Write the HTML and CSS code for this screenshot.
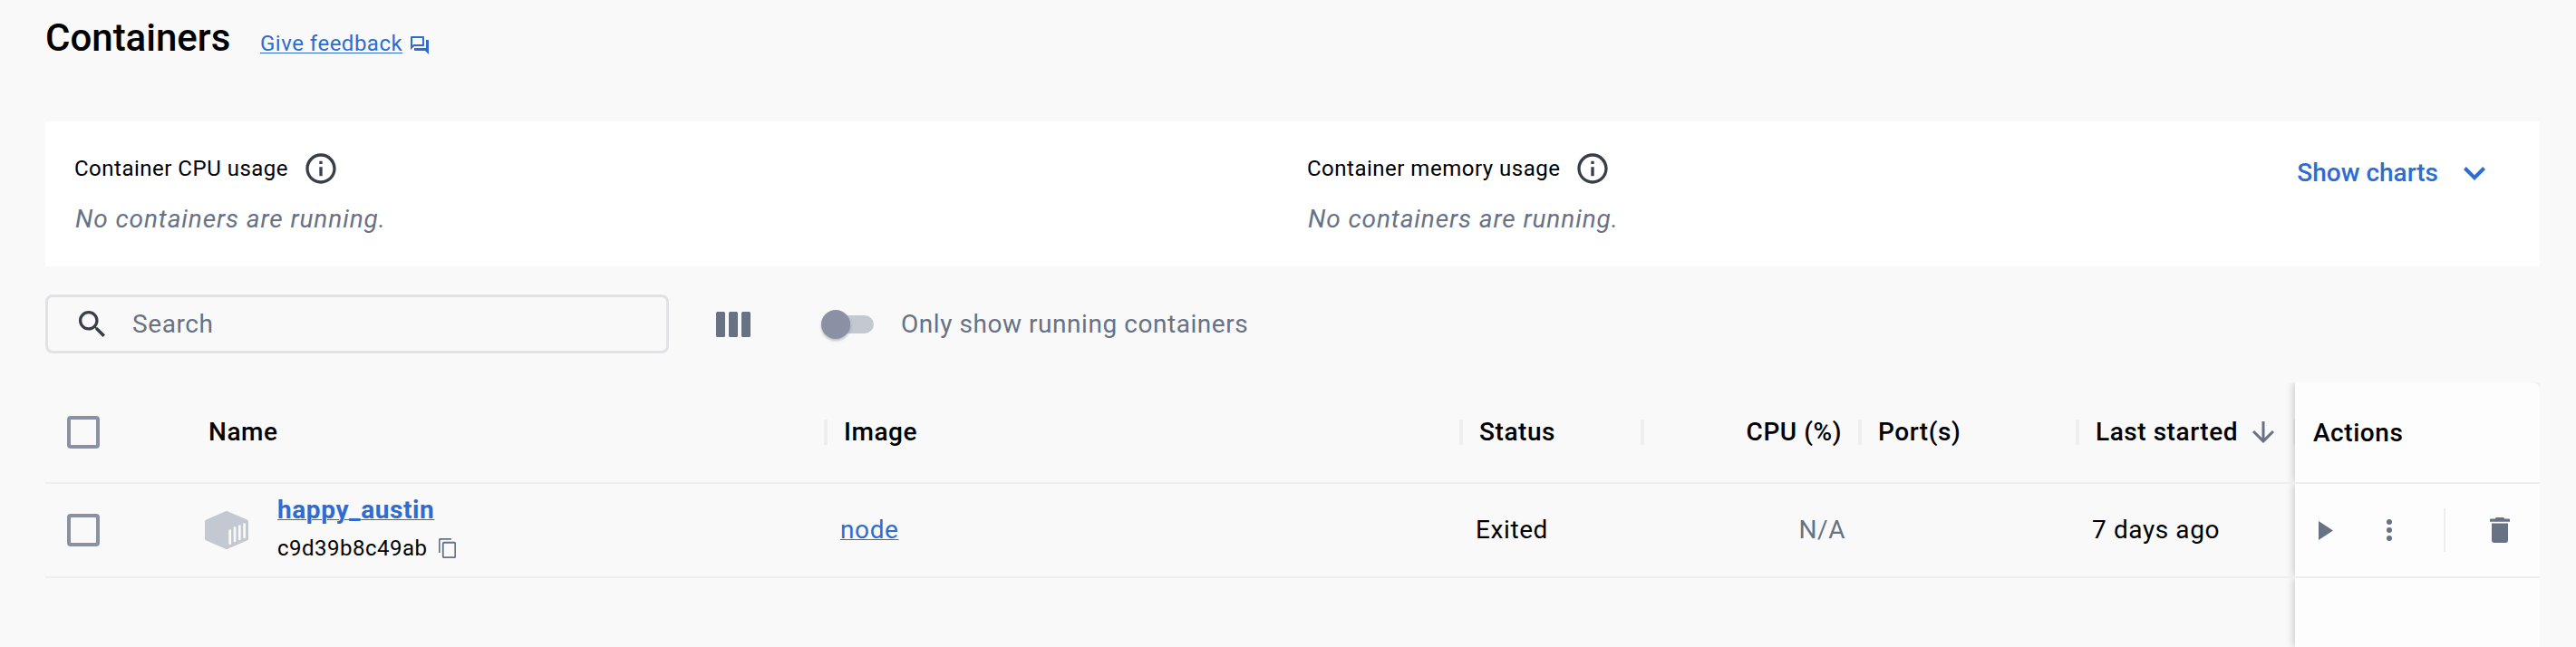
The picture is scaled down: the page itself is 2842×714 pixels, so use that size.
FILE: index.html
```
<!DOCTYPE html>
<html lang="en">
<head>
<meta charset="utf-8">
<title>Containers</title>
<link rel="stylesheet" href="styles.css">
</head>
<body>
<header class="page-head">
  <h1 class="title">Containers</h1>
  <a class="feedback"><span class="feedback-text">Give feedback</span>
    <svg class="forum" viewBox="2 2 20 20"><path d="M15 4v7H5.170L4 12.170V4h11m1-2H3c-.55 0-1 .45-1 1v14l4-4h10c.55 0 1-.45 1-1V3c0-.55-.45-1-1-1zm5 4h-2v9H6v2c0 .55.45 1 1 1h11l4 4V7c0-.55-.45-1-1-1z"/></svg>
  </a>
</header>

<section class="usage">
  <div class="metric">
    <div class="metric-label"><span class="t-small">Container CPU usage</span>
      <svg class="info" viewBox="0 0 24 24"><path d="M11 7h2v2h-2zm0 4h2v6h-2zm1-9C6.480 2 2 6.480 2 12s4.480 10 10 10 10-4.480 10-10S17.520 2 12 2zm0 18c-4.410 0-8-3.590-8-8s3.590-8 8-8 8 3.590 8 8-3.590 8-8 8z"/></svg>
    </div>
    <p class="metric-value">No containers are running.</p>
  </div>
  <div class="metric">
    <div class="metric-label"><span class="t-small">Container memory usage</span>
      <svg class="info" viewBox="0 0 24 24"><path d="M11 7h2v2h-2zm0 4h2v6h-2zm1-9C6.480 2 2 6.480 2 12s4.480 10 10 10 10-4.480 10-10S17.520 2 12 2zm0 18c-4.410 0-8-3.590-8-8s3.590-8 8-8 8 3.590 8 8-3.590 8-8 8z"/></svg>
    </div>
    <p class="metric-value">No containers are running.</p>
  </div>
  <button class="charts"><span>Show charts</span>
    <svg class="chevron" viewBox="6 8.590 12 7.410"><path d="M7.410 8.590 12 13.170l4.590-4.580L18 10l-6 6-6-6z"/></svg>
  </button>
</section>

<div class="toolbar">
  <div class="search">
    <svg class="search-icon" viewBox="3 3 17.490 17.490"><path d="M15.500 14h-.79l-.28-.27C15.410 12.590 16 11.110 16 9.500 16 5.910 13.090 3 9.500 3S3 5.910 3 9.500 5.910 16 9.500 16c1.610 0 3.090-.59 4.230-1.570l.27.28v.79l5 4.990L20.490 19l-4.990-5zm-6 0C7.010 14 5 11.990 5 9.500S7.010 5 9.500 5 14 7.010 14 9.500 11.990 14 9.500 14z"/></svg>
    <span class="search-text">Search</span>
  </div>
  <svg class="columns" viewBox="0 0 38 28"><rect width="10" height="28" rx="1.500"/><rect x="14" width="10" height="28" rx="1.500"/><rect x="28" width="10" height="28" rx="1.500"/></svg>
  <div class="switch"><span class="thumb"></span></div>
  <span class="switch-label">Only show running containers</span>
</div>

<main class="grid">
  <div class="row head">
    <div class="cell check"><span class="box"></span></div>
    <div class="cell">Name</div>
    <div class="cell sep"><span>Image</span></div>
    <div class="cell sep"><span>Status</span></div>
    <div class="cell sep right"><span>CPU (%)</span></div>
    <div class="cell sep"><span>Port(s)</span></div>
    <div class="cell sep sorted"><span>Last started</span>
      <svg class="arrow" viewBox="0 0 24 24"><path d="M24 12l-2.120-2.120L13.500 18.260V0h-3v18.260L2.120 9.880 0 12l12 12z"/></svg>
    </div>
    <div class="cell pinned actions-head"><span>Actions</span></div>
  </div>
  <div class="row body">
    <div class="cell check"><span class="box"></span></div>
    <div class="cell">
      <svg class="cube" viewBox="0 0 48 42"><path class="cube-face" d="M22.800.3Q24-.3 25.200.3L47 9.800Q48 10.300 48 11.400V30.600Q48 31.700 47 32.200L25.200 41.700Q24 42.300 22.800 41.700L1 32.200Q0 31.700 0 30.600V11.400Q0 10.300 1 9.800z"/><path class="cube-ribs" d="M27.700 21.500V35.800M33 18.500V33M38.300 16.500V31M43.600 14.500V28.800"/></svg>
      <div class="ident">
        <a class="name">happy_austin</a>
        <div class="hash"><span class="t-small">c9d39b8c49ab</span>
          <svg class="copy" viewBox="0 0 19 22"><path d="M.75 16V2.200Q.75.75 2.200.75H14"/><rect x="4.750" y="4.750" width="13.500" height="16.500" rx="1.200"/></svg>
        </div>
      </div>
    </div>
    <div class="cell"><a class="link">node</a></div>
    <div class="cell">Exited</div>
    <div class="cell right muted">N/A</div>
    <div class="cell"></div>
    <div class="cell">7 days ago</div>
    <div class="cell pinned actions">
      <svg class="play" viewBox="0 0 16 21"><path d="M0 0v21l16-10.500z"/></svg>
      <svg class="dots" viewBox="0 0 6 24"><circle cx="3" cy="3" r="3"/><circle cx="3" cy="12" r="3"/><circle cx="3" cy="21" r="3"/></svg>
      <span class="divider"></span>
      <svg class="trash" viewBox="0 0 22 28"><path d="M6 1.200Q6.300 0 7.500 0h7q1.200 0 1.500 1.200V1.600H21q1 0 1 1v2.200H0V2.600q0-1 1-1h5zM2 6.500h18V25q0 3-3 3H5q-3 0-3-3z"/></svg>
    </div>
  </div>
  <div class="row rest"><div class="cell pinned"></div></div>
</main>
</body>
</html>
```
FILE: styles.css
```
* { box-sizing: border-box; }
body {
  margin: 0;
  height: 714px;
  overflow: hidden;
  background: #f9f9f9;
  color: #000;
  font: 400 28px/32px Roboto, sans-serif;
  letter-spacing: 0.6px;
  display: flex;
  flex-direction: column;
  padding: 0 40px 0 50px;
}
svg { display: block; flex: none; fill: currentColor; }
.page-head { height: 134px; display: flex; align-items: flex-start; padding-top: 18px; }
.title { margin: 0; font: 500 42px/48px Roboto, sans-serif; letter-spacing: 0; width: 237px; }
.feedback { display: flex; color: #2e6cd4; font-size: 24px; letter-spacing: 0.5px; padding-top: 14px; }
.feedback-text { width: 156px; margin-right: 10px; white-space: nowrap; line-height: 32px; text-decoration: underline; text-decoration-thickness: 1px; text-underline-offset: 2px; }
.forum { width: 20px; height: 20px; margin-top: 8px; }

.usage { height: 160px; background: #fff; display: flex; padding: 32px 60px 0 32px; }
.metric { width: 1360px; flex: none; }
.metric + .metric { width: 800px; }
.metric-label { display: flex; align-items: center; height: 40px; gap: 16px; }
.t-small { font-size: 24px; letter-spacing: 0.5px; white-space: nowrap; }
.info { width: 40px; height: 40px; color: #393f49; }
.metric-value { margin: 20px 0 0 1px; font-style: italic; letter-spacing: 0.9px; color: #677285; white-space: nowrap; }
.charts { border: 0; background: none; padding: 0; margin-left: auto; height: 50px; font: 500 28px/32px Roboto, sans-serif; color: #2e6cd4; display: flex; align-items: center; gap: 28px; white-space: nowrap; }
.chevron { width: 24px; height: 15px; }

.toolbar { height: 128px; display: flex; align-items: center; }
.search { width: 688px; height: 65px; margin-bottom: 1px; border: 3px solid #e1e2e6; border-radius: 8px; display: flex; align-items: center; padding-left: 34px; gap: 30px; color: #677285; }
.search-icon { width: 29px; height: 29px; color: #393f49; }
.columns { width: 38px; height: 28px; margin-left: 52px; color: #677285; }
.switch { width: 56px; height: 20px; margin-left: 80px; border-radius: 10px; background: #c4c8d1; display: flex; align-items: center; }
.thumb { width: 32px; height: 32px; margin-left: -2px; border-radius: 50%; background: #8b91a5; box-shadow: 0 2px 3px rgba(0,0,0,.25); flex: none; }
.switch-label { margin-left: 30px; letter-spacing: 0.55px; color: #677285; white-space: nowrap; }

.grid { width: 2752px; height: 292px; display: flex; flex-direction: column; flex: none; }
.row { display: grid; grid-template-columns: 160px 701px 701px 200px 240px 240px 240px 270px; }
.cell { display: flex; align-items: center; white-space: nowrap; padding: 0 16px; height: 100%; }
.head { height: 112px; border-bottom: 2px solid #edeef0; font-weight: 500; letter-spacing: 0.55px; }
.head .cell { padding: 0 20px; }
.body { height: 104px; border-bottom: 2px solid #edeef0; }
.rest { flex: 1; }
.row .check { padding: 0 24px; }
.box { width: 36px; height: 36px; border: 4px solid #8b91a5; border-radius: 4px; }
.sep::before, .sorted::after { content: ""; width: 4px; height: 28px; flex: none; background: #edeef0; margin: 0 18px 0 -22px; }
.sep.right::before { margin-right: auto; }
.sorted::after { margin: 0 -22px 0 auto; }
.right { justify-content: flex-end; }
.arrow { width: 24px; height: 24px; margin-left: 16px; color: #677285; }
.pinned { grid-column: 8; background: #fdfdfd; box-shadow: -2px 0 8px rgba(0,0,0,.18); clip-path: inset(0 0 0 -12px); }
.head .actions-head { border-top-right-radius: 8px; padding-top: 2px; }
.cube { width: 48px; height: 42px; margin-right: 32px; }
.cube-face { fill: #c4c8d1; }
.cube-ribs { fill: none; stroke: #f9f9f9; stroke-width: 2.700; stroke-linecap: round; }
.name { display: block; margin: -2px 0 10px; font-weight: 700; color: #2e6cd4; text-decoration: underline; text-decoration-thickness: 1px; }
.hash { display: flex; align-items: center; gap: 12px; }
.copy { width: 19px; height: 22px; fill: none; stroke: #677285; stroke-width: 1.800; }
.link { color: #2e6cd4; text-decoration: underline; text-decoration-thickness: 1px; }
.muted { color: #677285; }
.row .actions { padding: 0 33px 0 26px; color: #677285; }
.play { width: 16px; height: 21px; }
.dots { width: 6px; height: 24px; margin-left: 59px; }
.divider { width: 2px; height: 48px; background: #edeef0; margin-left: 57px; }
.trash { width: 22px; height: 28px; margin-left: 49px; }
```
